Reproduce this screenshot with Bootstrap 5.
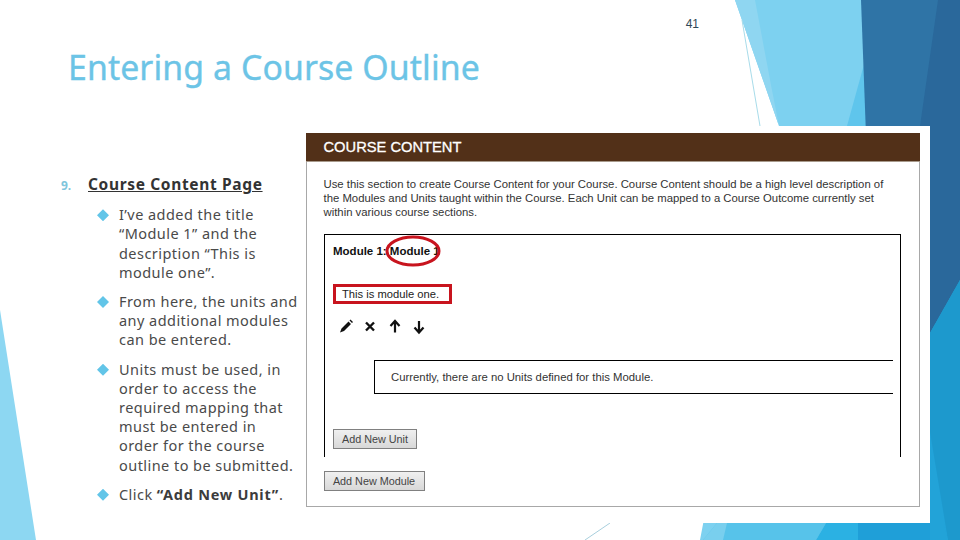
<!DOCTYPE html>
<html lang="en">
<head>
<meta charset="utf-8">
<title>Entering a Course Outline</title>
<link rel="stylesheet" href="https://cdn.jsdelivr.net/npm/bootstrap@5.3.0/dist/css/bootstrap.min.css">
<style>
html,body{margin:0;background:#fff}
.slide-stage{position:relative;width:960px;height:540px;overflow:hidden;background:#fff;font-family:"Noto Sans","DejaVu Sans",sans-serif}
.slide-art{position:absolute;left:0;top:0;width:960px;height:540px}
.slide-flow{position:relative;height:540px}
.slide-head{height:126px;padding-top:17px}
.page-num{font:12px/14px "Liberation Sans",sans-serif;color:#2f4858;width:699px;text-align:right}
.slide-title{font:400 33.8px/40px "Noto Sans",sans-serif;color:#6cc4e6;margin:16px 0 0 68px;letter-spacing:.1px;-webkit-text-stroke:.35px #6cc4e6}
.notes-col{width:299px;padding-top:49px;color:#4a4a4a;font-size:14.5px;line-height:19.2px;letter-spacing:.45px}
.step-num{width:27px;margin-left:61px;font-size:12px;font-weight:700;color:#7fc5dc;letter-spacing:0}
.step-title{font-weight:700;font-size:15.5px;letter-spacing:.65px;text-decoration:underline;color:#333}
.note-list{list-style:none;margin:10px 0 0;padding:0 0 0 97px}
.note-item{display:flex;margin-bottom:10px}
.note-mark{flex:none;width:12px;height:12px;margin:4px 10px 0 0;background:#62c5e8;clip-path:polygon(50% 0,100% 50%,50% 100%,0 50%)}
.note-item strong{letter-spacing:.75px;color:#3c3c3c}
.shot-frame{background:#fff;width:631px;height:397px;padding:7px 10.5px 16px 7px;position:relative}
.shot-page{height:100%;border:solid #a8a8a8;border-width:0 1.5px 1.5px 1.5px;font:11.34px/14px "Liberation Sans",sans-serif;color:#333;background:#fff}
.shot-bar{background:#523018;color:#fff;height:29px;margin:0 -1.5px;padding-left:18px;font:400 14.7px/29px "Liberation Sans",sans-serif;-webkit-text-stroke:.3px #fff;border-bottom:1px solid #a89a8c}
.shot-intro{padding:15px 18px 0 16.5px;height:72px;margin:0}
.module-box{margin:0 18px 0 16.5px;height:223px;border:solid #000;border-width:1.5px 1.5px 0 1.5px;padding:9px 0 0 8.5px;position:relative;color:#111}
.module-name{font-weight:700;font-size:11.5px;height:24px}
.module-desc{display:inline-block;border:3px solid #c8141e;width:119px;height:20px;margin-top:16px;padding-left:6px;font-size:11.2px;line-height:14px;overflow:hidden;color:#222}
.tool-row{margin:12px 0 0 7px;height:16px}
.tool-row svg{display:block}
.unit-box{margin:25px 7px 0 41px;height:34px;border:solid #000;border-width:1.5px 0 1.5px 1.5px;padding-left:16px;line-height:32px;color:#333}
.shot-btn{display:block;font:10.8px/15px "Liberation Sans",sans-serif;color:#444;padding:0;background:linear-gradient(#f0f0f0,#d8d8d8);border:1px solid #808080;border-radius:0;height:20px}
.btn-unit{width:84px;margin-top:35px}
.btn-module{width:101px;margin:14px 0 0 16.5px}
.title-ring{position:absolute;left:60px;top:0;width:56px;height:32px}
</style>
</head>
<body>
<div class="slide-stage">
<svg class="slide-art" viewBox="0 0 960 540" aria-hidden="true">
<polygon points="735,0 960,0 960,540 700,540 779,126" fill="#7dd1f0"/>
<polygon points="735,0 755,0 771,85 779,126" fill="#8fd6f1"/>
<polygon points="868,50 847,126 881,126" fill="#5fc5ec"/>
<polygon points="861,0 960,0 960,540 881,540" fill="#2f74a6"/>
<polygon points="938,0 960,0 960,540 900,540 920,126" fill="#2a689b"/>
<polygon points="930,333 930,540 960,540 960,280" fill="#22a3d8"/>
<polygon points="930,432 948,540 960,540 960,280 930,333" fill="#1d99cd"/>
<polygon points="717,523 826,523 816,540 703,540" fill="#57c3ea"/>
<polygon points="717,523 727,523 723,540 703,540" fill="#79cfee"/>
<polygon points="826,523 858,523 858,540 816,540" fill="#2bb1e3"/>
<polygon points="858,523 930,523 930,540 858,540" fill="#1f9fd8"/>
<polygon points="930,523 944,523 948,540 930,540" fill="#22a3d8"/>
<polygon points="0,310 36,540 0,540" fill="#8dd7f2"/>
<line x1="742" y1="20" x2="760" y2="126" stroke="#a8dcea" stroke-width="1"/>
<line x1="585" y1="540" x2="610" y2="523" stroke="#a8cfdd" stroke-width="1"/>
</svg>
<div class="slide-flow d-flex flex-column">
<header class="slide-head">
<div class="page-num">41</div>
<h1 class="slide-title">Entering a Course Outline</h1>
</header>
<div class="d-flex flex-grow-1">
<section class="notes-col">
<div class="d-flex align-items-baseline">
<span class="step-num">9.</span>
<span class="step-title">Course Content Page</span>
</div>
<ul class="note-list">
<li class="note-item"><span class="note-mark"></span><span>I’ve added the title<br>“Module 1” and the<br>description “This is<br>module one”.</span></li>
<li class="note-item"><span class="note-mark"></span><span>From here, the units and<br>any additional modules<br>can be entered.</span></li>
<li class="note-item"><span class="note-mark"></span><span>Units must be used, in<br>order to access the<br>required mapping that<br>must be entered in<br>order for the course<br>outline to be submitted.</span></li>
<li class="note-item"><span class="note-mark"></span><span>Click <strong>“Add New Unit”</strong>.</span></li>
</ul>
</section>
<section class="shot-frame">
<div class="shot-page">
<div class="shot-bar">COURSE CONTENT</div>
<p class="shot-intro">Use this section to create Course Content for your Course. Course Content should be a high level description of the Modules and Units taught within the Course. Each Unit can be mapped to a Course Outcome currently set within various course sections.</p>
<div class="module-box">
<div class="module-name">Module 1: Module 1</div>
<svg class="title-ring" viewBox="0 0 56 32" aria-hidden="true"><ellipse cx="28" cy="16" rx="26" ry="14" fill="none" stroke="#c8141e" stroke-width="3"/></svg>
<div class="module-desc">This is module one.</div>
<div class="tool-row">
<svg width="90" height="16" viewBox="0 0 90 16" aria-hidden="true">
<path d="M0 13.5 L1.5 9.5 L8.5 2.5 L11 5 L4 12 Z M9.5 1.5 L10.5 .5 L13 3 L12 4 Z" fill="#111"/>
<path d="M26 3.5 L34 11.5 M34 3.5 L26 11.5" stroke="#111" stroke-width="2.4" fill="none"/>
<path d="M55 13.5 V3 M50.5 7 L55 2 L59.5 7" stroke="#111" stroke-width="2.2" fill="none"/>
<path d="M79 2 V12.5 M74.5 8.5 L79 13.5 L83.5 8.5" stroke="#111" stroke-width="2.2" fill="none"/>
</svg>
</div>
<div class="unit-box">Currently, there are no Units defined for this Module.</div>
<button type="button" class="shot-btn btn-unit">Add New Unit</button>
</div>
<button type="button" class="shot-btn btn-module">Add New Module</button>
</div>
</section>
</div>
</div>
</div>
<script src="https://cdn.jsdelivr.net/npm/bootstrap@5.3.0/dist/js/bootstrap.bundle.min.js"></script>
</body>
</html>
